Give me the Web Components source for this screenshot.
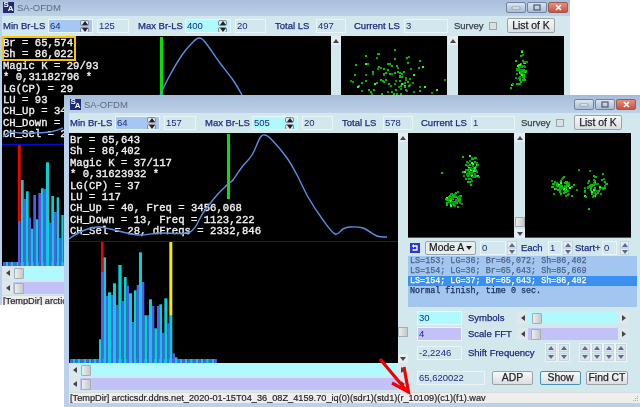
<!DOCTYPE html>
<html><head><meta charset="utf-8"><title>SA-OFDM</title>
<style>html,body{margin:0;padding:0;background:#fff}</style></head>
<body>
<sa-desktop>
  <sa-window style="left:-3px;top:-2px;width:573px;height:307px;--right:2px;--bb:0px">
    <sa-toolbar min="64" a="125" max="400" b="20" total="497" cur="3"></sa-toolbar>
    <sa-client>
      <sa-plot slot="main" ox="2" oy="36" bar="160,37,95" box="1" hist="back"
        curve="3,137 10,132 20,133 33,133 50,132 63,128 M 160,95 170,75 182,55 193,42 199,38 205,42 220,63 233,80 242,95"><span>Br = 65,574</span><span>Sh = 86,022</span><span>Magic K = 29/93</span><span>* 0,31182796 *</span><span>LG(CP) = 29</span><span>LU = 93</span><span>CH_Up = 34</span><span>CH_Down =</span><span>CH_Sel = 2</span></sa-plot>
      <sa-hscroll slot="main" color="#aefaff" pos="1" style="margin-top:1px"></sa-hscroll>
      <sa-hscroll slot="main" color="#c2c2f8" pos="1" style="margin-top:3px"></sa-hscroll>
      <sa-row slot="side" style="height:105px">
        <sa-scatter clusters="52,42,19,13,115" seed="5"></sa-scatter>
        <sa-vscroll h="105" pos="-1" style="margin-left:1px"></sa-vscroll>
        <sa-scatter clusters="62,32,3,7,70;52,50,4,3,3" seed="9"></sa-scatter>
      </sa-row>
    </sa-client>
    <sa-status>[TempDir] arctic</sa-status>
  </sa-window>

  <sa-window style="left:64px;top:95px;width:576px;height:312px;--right:4px;--bb:4px">
    <sa-toolbar min="64" a="157" max="505" b="20" total="578" cur="1"></sa-toolbar>
    <sa-client>
      <sa-plot slot="main" ox="69" oy="133" bar="227,134,199" hist="front"
        curve="69,239 80,232 97,227 110,229 127,233 140,235 160,233 190,232 203,213 217,195 228,184 233,180 242,167 252,155 260,138 265,135 272,140 287,158 297,175 308,197 323,220 335,234 343,229 350,227 363,228 377,236 387,237"><span>Br = 65,643</span><span>Sh = 86,402</span><span>Magic K = 37/117</span><span>* 0,31623932 *</span><span>LG(CP) = 37</span><span>LU = 117</span><span>CH_Up = 40, Freq = 3456,068</span><span>CH_Down = 13, Freq = 1123,222</span><span>CH_Sel = 28, dFreqs = 2332,846</span></sa-plot>
      <sa-hscroll slot="main" color="#aefaff" pos="1" style="margin-top:1px"></sa-hscroll>
      <sa-hscroll slot="main" color="#c2c2f8" pos="1" style="margin-top:2px"></sa-hscroll>

      <sa-row slot="side" style="height:105px">
        <sa-scatter clusters="62,37,3.5,6,70;45,66,4.5,3.5,65;33,39,0,0,1;62,24,3,1,6" seed="3"></sa-scatter>
        <sa-vscroll h="105" pos="75" style="margin-left:1px"></sa-vscroll>
        <sa-scatter clusters="36,53,4.5,4,75;67,54,3.5,5,50;78,52,2,3,12;53,36,0,0,1;64,37,0,0,1;77,40,0,0,1;63,75,0,0,1;51,56,0,0,1" seed="11"></sa-scatter>
      </sa-row>
      <sa-row slot="side" style="height:14px;margin-top:3px">
        <sa-backicon style="margin-left:2px"></sa-backicon>
        <sa-select style="margin-left:5px">Mode A</sa-select>
        <sa-field w="26" value="0" style="margin-left:4px"></sa-field>
        <sa-updown w="10" style="margin-left:1px"></sa-updown>
        <sa-label w="27" style="margin-left:4px">Each</sa-label>
        <sa-field w="14" value="1"></sa-field>
        <sa-updown w="10" style="margin-left:1px"></sa-updown>
        <sa-label w="27" style="margin-left:2px">Start+</sa-label>
        <sa-field w="15" value="0"></sa-field>
        <sa-updown w="9" style="margin-left:3px"></sa-updown>
      </sa-row>
      <sa-list slot="side" style="margin-top:1px"><span>LS=153; LG=36; Br=66,072; Sh=86,402</span><span>LS=154; LG=36; Br=65,643; Sh=85,669</span><span class="sel">LS=154; LG=37; Br=65,643; Sh=86,402</span><span class="end">Normal finish, time 0 sec.</span></sa-list>
      <sa-row slot="side" style="height:14px;margin-top:4px">
        <sa-field w="45" value="30" bg="#aefaff" style="margin-left:9px"></sa-field>
        <sa-label w="49" style="margin-left:6px">Symbols</sa-label>
        <sa-hscroll color="#aefaff" pos="4" style="width:112px"></sa-hscroll>
      </sa-row>
      <sa-row slot="side" style="height:14px;margin-top:2px">
        <sa-field w="45" value="4" bg="#c2c2f8" style="margin-left:9px"></sa-field>
        <sa-label w="49" style="margin-left:6px">Scale FFT</sa-label>
        <sa-hscroll color="#c2c2f8" pos="3" style="width:112px"></sa-hscroll>
      </sa-row>
      <sa-row slot="side" style="height:19px;margin-top:2px">
        <sa-field w="45" value="-2,2246" style="margin-left:9px"></sa-field>
        <sa-label w="77" style="margin-left:6px">Shift Frequency</sa-label>
        <sa-updown w="12" tall></sa-updown>
        <sa-updown w="12" tall style="margin-left:1px"></sa-updown>
        <sa-updown w="12" tall style="margin-left:9px"></sa-updown>
        <sa-updown w="12" tall></sa-updown>
        <sa-updown w="12" tall></sa-updown>
        <sa-updown w="12" tall></sa-updown>
      </sa-row>
      <sa-row slot="side" style="height:14px;margin-top:9px">
        <sa-field w="68" value="65,620022" style="margin-left:9px"></sa-field>
        <sa-btn w="41" style="margin-left:7px">ADP</sa-btn>
        <sa-btn w="41" active style="margin-left:7px">Show</sa-btn>
        <sa-btn w="42" style="margin-left:5px">Find CT</sa-btn>
      </sa-row>
    </sa-client>
    <sa-status grip>[TempDir] arcticsdr.ddns.net_2020-01-15T04_36_08Z_4159.70_iq(0)(sdr1)(std1)(r_10109)(c1)(f1).wav</sa-status>
  </sa-window>
  <sa-arrow></sa-arrow>
</sa-desktop>

<script>
const SANS='"Liberation Sans",Arial,sans-serif', NAVY='#1b2a86';
const tri=(d,c='#56607a')=>{const p={u:'0,4 3,0 6,4',d:'0,0 6,0 3,4',l:'4,0 4,6 0,3',r:'0,0 4,3 0,6'}[d];
 const v=(d=='u'||d=='d')?[6,4]:[4,6];return `<svg width="${v[0]}" height="${v[1]}" viewBox="0 0 ${v[0]} ${v[1]}" style="display:block"><polygon points="${p}" fill="${c}"/></svg>`};
class Base extends HTMLElement{
  connectedCallback(){ if(this.shadowRoot)return; this.attachShadow({mode:'open'});
    this.shadowRoot.innerHTML=`<style>${this.css()}</style>${this.html()}`; }
  css(){return ''} html(){return '<slot></slot>'}
  a(n,d){return this.hasAttribute(n)?this.getAttribute(n):d}
}
const def=(n,css,html)=>customElements.define(n,class extends Base{css(){return css.call(this)}html(){return html?html.call(this):'<slot></slot>'}});

def('sa-desktop',()=>`:host{display:block;position:relative;width:640px;height:407px;overflow:hidden;background:#fff;filter:blur(.3px)}`);

customElements.define('sa-window',class extends Base{
 css(){return `:host{position:absolute;display:flex;flex-direction:column;box-sizing:border-box;overflow:hidden;background:#b9d1ec;font-family:${SANS}}
 .title{flex:none;height:18px;display:flex;align-items:center;padding:0 var(--right) 0 6px;background:linear-gradient(#a6bcd9,#bdd1e8);color:#5c6c80;font-size:9.5px}
 .logo{width:11px;height:11px;background:#1c2a78;color:#fff;position:relative;font:bold 8px/8px ${SANS};margin-right:3px;flex:none}
 .logo b{position:absolute;left:.5px;top:-.5px}.logo i{position:absolute;right:.5px;bottom:-.5px;font-style:normal;font-weight:bold}
 .sp{flex:1}
 .c{width:20px;height:11px;margin-left:1px;box-sizing:border-box;border:1px solid #71849e;border-radius:2px;background:linear-gradient(#dbe6f2,#a8bdd6);display:flex;align-items:center;justify-content:center}
 .c.x{background:linear-gradient(#e88f80,#c9523f);border-color:#9a5a50}
 .body{flex:1;display:flex;flex-direction:column;margin-left:5px;margin-bottom:var(--bb);min-height:0}`}
 html(){return `<div class="title"><span class="logo"><b>S</b><i>A</i></span><span>SA-OFDM</span><span class="sp"></span>
 <span class="c"><svg width="10" height="5"><rect x="1" y="2" width="8" height="2" fill="#fff" stroke="#667"  stroke-width=".5"/></svg></span>
 <span class="c"><svg width="8" height="7"><rect x="1" y="1" width="6" height="5" fill="none" stroke="#556" stroke-width="1.2"/></svg></span>
 <span class="c x"><svg width="9" height="7"><path d="M2 1L7 6M7 1L2 6" stroke="#fff" stroke-width="1.6"/></svg></span></div>
 <div class="body"><slot></slot></div>`}
});

customElements.define('sa-toolbar',class extends Base{
 css(){return `:host{display:flex;align-items:center;flex:none;height:20px;background:#d3e8ec;padding-left:1px;padding-bottom:1px;box-sizing:border-box}`}
 html(){const g=n=>this.getAttribute(n);return `
 <sa-label w="45">Min Br-LS</sa-label><sa-field w="45" value="${g('min')}" bg="#a6c7f1" spin></sa-field>
 <sa-field w="32" value="${g('a')}" style="margin-left:4px"></sa-field>
 <sa-label w="47" style="margin-left:9px">Max Br-LS</sa-label><sa-field w="46" value="${g('max')}" bg="#aefaff" spin></sa-field>
 <sa-field w="31" value="${g('b')}" style="margin-left:4px"></sa-field>
 <sa-label w="41" style="margin-left:9px">Total LS</sa-label><sa-field w="30" value="${g('total')}"></sa-field>
 <sa-label w="50" style="margin-left:8px">Current LS</sa-label><sa-field w="44" value="${g('cur')}"></sa-field>
 <sa-label w="35" dark style="margin-left:6px">Survey</sa-label><sa-check></sa-check>
 <sa-btn w="48" style="margin-left:10px;height:15px">List of K</sa-btn>`}
});

def('sa-label',function(){return `:host{display:inline-block;flex:none;width:${this.a('w',40)}px;box-sizing:border-box;color:${this.hasAttribute('dark')?'#3a3f4a':NAVY};font:9.5px/14px ${SANS};white-space:nowrap;-webkit-text-stroke:.25px currentColor}`});

def('sa-field',function(){return `:host{display:inline-flex;flex:none;align-items:center;box-sizing:border-box;width:${this.a('w',30)}px;height:14px;background:${this.a('bg','#d3e8ec')};border:1px solid #e9f5f7;color:${NAVY};font:9.5px/12px ${SANS};padding-left:1px;overflow:hidden}
 .t{flex:1}.s{width:9px;height:12px;margin-right:3px;display:flex;flex-direction:column;gap:1px}
 .s i{flex:1;background:#e6e6e6;border:.5px solid #889;border-radius:2px;display:flex;align-items:center;justify-content:center}`},
 function(){return `<span class="t">${this.a('value','')}</span>${this.hasAttribute('spin')?`<span class="s"><i>${tri('u','#222')}</i><i>${tri('d','#222')}</i></span>`:''}`});

def('sa-check',()=>`:host{display:inline-block;flex:none;width:8px;height:8px;box-sizing:border-box;background:#d8e0e2;border:1px solid #9aa5ab}`,()=>'');

def('sa-btn',function(){const ac=this.hasAttribute('active');return `:host{display:inline-flex;flex:none;align-items:center;justify-content:center;box-sizing:border-box;width:${this.a('w',40)}px;height:14px;border:1px solid ${ac?'#3f93b4':'#9aa3a8'};border-radius:2px;background:linear-gradient(#f7f8f8,#dcdfe0);color:#22262e;font:10.4px/12px ${SANS};-webkit-text-stroke:.25px currentColor;white-space:nowrap}`});

def('sa-client',()=>`:host{display:grid;grid-template-columns:339px 229px;height:259px;flex:none;background:#d3e8ec}
 .m,.s{display:flex;flex-direction:column;min-width:0}`,()=>`<div class="m"><slot name="main"></slot></div><div class="s"><slot name="side"></slot></div>`);

def('sa-row',()=>`:host{display:flex;align-items:center;flex:none}`);

def('sa-status',function(){return `:host{display:flex;align-items:center;flex:none;height:11px;background:#f0eeec;border-top:1px solid #dcdcdc;box-sizing:border-box;color:#23252c;font:9.2px/10px ${SANS};padding-left:1px;white-space:nowrap;overflow:hidden;-webkit-text-stroke:.2px currentColor}
 .g{flex:1}svg{flex:none;margin-right:1px}`},function(){return `<slot></slot><span class="g"></span>${this.hasAttribute('grip')?'<svg width="7" height="7"><g fill="#b0b0b0"><rect x="5" y="1" width="1" height="1"/><rect x="3" y="3" width="1" height="1"/><rect x="5" y="3" width="1" height="1"/><rect x="1" y="5" width="1" height="1"/><rect x="3" y="5" width="1" height="1"/><rect x="5" y="5" width="1" height="1"/></g></svg>':''}`});

customElements.define('sa-hscroll',class extends Base{
 css(){return `:host{display:flex;flex:none;height:12px;background:#d7e4ea}
 .b{width:11px;flex:none;display:flex;align-items:center;justify-content:center;background:#dde7ec}
 .t{flex:1;background:${this.a('color')};display:flex;align-items:center;min-width:0}
 .th{width:10px;height:11px;flex:none;margin-left:${this.a('pos',1)}px;background:linear-gradient(90deg,#eceeee,#c4c8cb);border:1px solid #a5adb2;border-radius:1px;box-sizing:border-box}`}
 html(){return `<span class="b">${tri('l','#444')}</span><span class="t"><span class="th"></span></span><span class="b">${tri('r','#444')}</span>`}
});

customElements.define('sa-vscroll',class extends Base{
 css(){const p=+this.a('pos',-1);return `:host{display:flex;flex-direction:column;flex:none;width:10px;height:${this.a('h',230)}px;background:#d3e8ec}
 .b{height:9px;flex:none;background:#e6eef1;display:flex;align-items:center;justify-content:center}
 .t{flex:1;min-height:0}.th{display:${p<0?'none':'block'};height:10px;margin-top:${p}px;background:linear-gradient(90deg,#eceeee,#c4c8cb);border:1px solid #a5adb2;box-sizing:border-box}`}
 html(){return `<span class="b">${tri('u','#445')}</span><span class="t"><div class="th"></div></span><span class="b">${tri('d','#445')}</span>`}
});

customElements.define('sa-updown',class extends Base{
 css(){const tall=this.hasAttribute('tall');return `:host{display:flex;flex-direction:column;flex:none;gap:${tall?1:0}px;width:${this.a('w',10)}px;height:${tall?19:14}px;box-sizing:border-box;${tall?'border:1px solid #eef5f6;':''}}
 i{flex:1;background:${tall?'#dde5ee':'#e6eef1'};display:flex;align-items:center;justify-content:center;border:.5px solid #c8d6da}`}
 html(){return `<i>${tri('u','#5a6a94')}</i><i>${tri('d','#5a6a94')}</i>`}
});

def('sa-select',()=>`:host{display:inline-flex;flex:none;align-items:center;box-sizing:border-box;width:51px;height:14px;padding:0 3px;background:#e8eef0;border:1px solid #98a4ac;border-radius:2px;color:#14161e;font:10.4px/12px ${SANS};-webkit-text-stroke:.2px currentColor}
 .s{flex:1;white-space:nowrap}`,()=>`<span class="s"><slot></slot></span>${tri('d','#222')}`);

def('sa-backicon',()=>`:host{display:inline-block;flex:none;width:10px;height:10px;line-height:0}`,()=>`<svg width="10" height="10" viewBox="0 0 10 10" style="display:block"><rect width="10" height="10" fill="#2b35d6"/><path d="M3 3H7V7H2.5" fill="none" stroke="#fff" stroke-width="1.3"/><path d="M4 1L1.8 3L4 5Z" fill="#fff"/></svg>`);

def('sa-list',()=>`:host{display:flex;flex-direction:column;flex:none;height:51px;box-sizing:border-box;background:#a2c6f0;font:8.42px/10px "Liberation Mono",monospace;-webkit-text-stroke:.25px currentColor}
 ::slotted(span){display:block;height:10px;padding-left:2px;color:#4c6486;white-space:pre}
 ::slotted(.sel){background:#3a8ff0;color:#fff}
 ::slotted(.end){color:#16305e}`);

customElements.define('sa-scatter',class extends Base{
 css(){return `:host{display:block;flex:none;width:106px;height:105px;background:#000;border-bottom:1px solid #555;box-sizing:border-box;line-height:0}`}
 html(){let s=+this.a('seed',1)*7919+13;const r=()=>(s=(s*16807)%2147483647)/2147483647;
  const g=()=>{let t=0;for(let i=0;i<4;i++)t+=r();return (t-2)*1.73};
  let o='';
  for(const c of this.a('clusters','').split(';')){const[x,y,sx,sy,n]=c.split(',').map(Number);
   for(let i=0;i<n;i++){const px=Math.round(x+g()*sx),py=Math.round(y+g()*sy);
    const col=r()<.12?'#2cff2c':(r()<.55?'#00c400':'#00a000');
    o+=`<rect x="${px}" y="${py}" width="2" height="2" fill="${col}"/>`}}
  return `<svg width="106" height="104" style="display:block">${o}</svg>`}
});

const HIST={
 front:{ox:69,oy:12,base:[70,216],bars:[[297,303,'c',328],[303,310,'v',126],[310,318,'c',82],[318,324,'v',198],[324,333,'c',187],[333,339,'v',195],[339,348,'c',160],[348,355,'v',225],[355,365,'c',105],[365,372,'v',213],[372,380,'c',141],[380,387,'v',167],[387,396,'c',190],[396,402,'v',276],[402,410,'c',181],[410,417,'v',165],[417,426,'c',67],[426,433,'v',156],[433,442,'c',256],[442,447,'v',256],[447,456,'c',208],[456,463,'v',228],[463,471,'c',295],[471,478,'v',228],[478,486,'c',223],[486,493,'v',308],[493,502,'c',205],[502,508,'v',280],[508,517,'c',257],[517,525,'v',370],[525,532,'c',382]],
   over:[[303,310,'#f00000',36,126],[508,517,'#f5ea00',36,257]]},
 back:{ox:2,oy:25,base:[3,90],bars:[[54,62,'v',303],[63,71,'c',180],[71,78,'v',237],[78,86,'c',214],[86,93,'v',293],[93,100,'c',326],[100,108,'v',225],[108,115,'c',298],[115,123,'v',219],[123,131,'c',205],[131,138,'v',207],[138,147,'c',127],[147,154,'v',308],[154,162,'c',228],[162,170,'v',276],[170,177,'c',232],[177,184,'v',354],[184,191,'c',285]],
   over:[[54,62,'#f00000',75,303]]}
};
customElements.define('sa-plot',class extends Base{
 css(){return `:host{display:grid;grid-template-columns:329px 10px;flex:none;height:230px}
 .p{background:#000;display:flex;flex-direction:column;min-width:0}
 .top{position:relative;height:108px;flex:none;box-sizing:border-box;padding:2px 0 0 1px;color:#f0f0f0;font:10.62px/11.4px "Liberation Mono",monospace;white-space:pre;-webkit-text-stroke:.35px currentColor;overflow:hidden}
 ::slotted(span){display:block;width:max-content;height:11.4px}
 .line{height:1px;background:#0a0ad0;flex:none}
 svg{display:block}
 .ov{position:absolute;left:0;top:0;pointer-events:none}
 .box{position:absolute;left:0;top:0;width:74px;height:25px;box-sizing:border-box;border:2px solid #f7c600}`}
 html(){
  const ox=+this.a('ox'),oy=+this.a('oy');
  const segs=this.a('curve','').split(' M ').map(t=>t.trim().split(/\s+/).map(p=>p.split(',').map(Number)));
  let d='';
  for(const pts0 of segs){const P=pts0.map(([x,y])=>[x-ox,y-oy]);
   d+=`M${P[0][0]} ${P[0][1]}`;
   for(let i=0;i<P.length-1;i++){const a=P[Math.max(i-1,0)],b=P[i],c=P[i+1],e=P[Math.min(i+2,P.length-1)];
    d+=`C${(b[0]+(c[0]-a[0])/6).toFixed(1)} ${(b[1]+(c[1]-a[1])/6).toFixed(1)} ${(c[0]-(e[0]-b[0])/6).toFixed(1)} ${(c[1]-(e[1]-b[1])/6).toFixed(1)} ${c[0]} ${c[1]}`}}
  const [bx,by0,by1]=this.a('bar').split(',').map(Number);
  const H=HIST[this.a('hist')];const hh=121;let r='';
  const X=z=>z/3-H.ox,Y=z=>z/3-H.oy;
  const col={c:'#00d2d8',v:'#5a5aea'};
  for(let x=H.base[0]-H.ox,i=0;x<H.base[1]-H.ox;x+=2.67,i++)r+=`<rect x="${x.toFixed(2)}" y="117" width="2.67" height="4" fill="${i%2?col.c:col.v}"/>`;
  for(const[a,b,c,t]of H.bars)r+=`<rect x="${X(a).toFixed(2)}" y="${Y(t).toFixed(1)}" width="${((b-a)/3).toFixed(2)}" height="${(hh-Y(t)).toFixed(1)}" fill="${col[c]}"/>`;
  for(const[a,b,c,t,e]of H.over)r+=`<rect x="${X(a).toFixed(2)}" y="${Y(t).toFixed(1)}" width="${((b-a)/3).toFixed(2)}" height="${((e-t)/3).toFixed(1)}" fill="${c}"/>`;
  return `<div class="p"><div class="top"><slot></slot>
   <svg class="ov" width="329" height="108"><rect x="${bx-ox}" y="${by0-oy}" width="3" height="${by1-by0}" fill="#00e400"/><path d="${d}" fill="none" stroke="#5a90e4" stroke-width="1.4" stroke-linejoin="round"/></svg>
   ${this.hasAttribute('box')?'<div class="box"></div>':''}</div>
   <div class="line"></div><svg width="329" height="121">${r}</svg></div>
   <sa-vscroll h="230" pos="185"></sa-vscroll>`}
});

def('sa-arrow',()=>`:host{position:absolute;left:370px;top:350px;width:50px;height:50px;pointer-events:none}`,
 ()=>`<svg width="50" height="50" viewBox="370 350 50 50"><path d="M380 359L406 390" stroke="#f00000" stroke-width="3.2" fill="none"/><path d="M392 383L408.500 392L404 367" stroke="#f00000" stroke-width="3.2" fill="none"/></svg>`);
</script>
</body></html>
